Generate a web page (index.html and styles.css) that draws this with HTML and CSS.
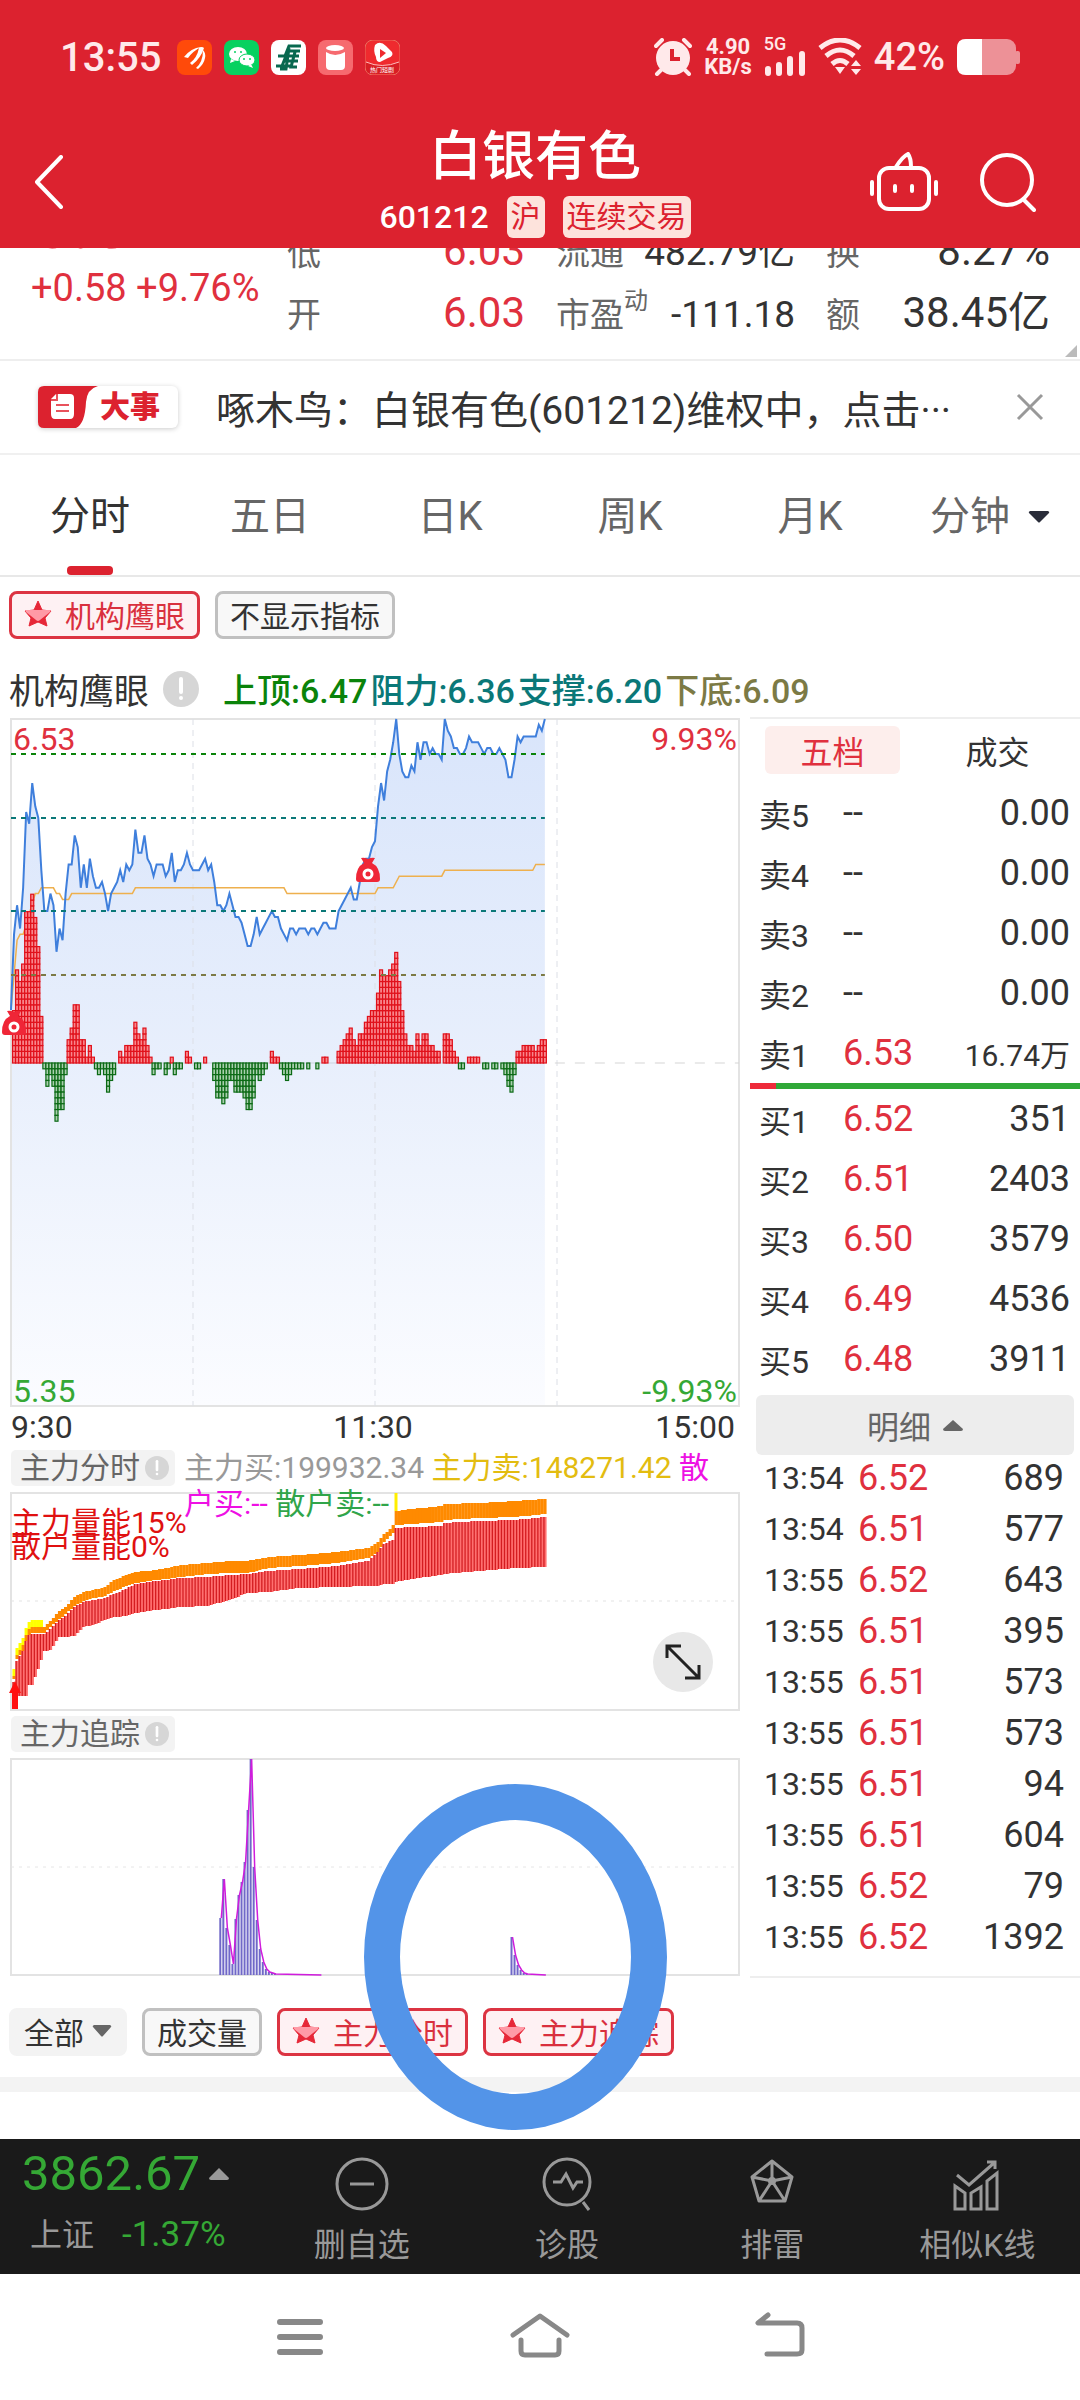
FILE: index.html
```html
<!DOCTYPE html>
<html lang="zh-CN">
<head>
    <meta charset="UTF-8">
    <meta name="viewport" content="width=device-width, initial-scale=1.0">
    <title>白银有色 601212</title>
    <link rel="stylesheet" href="styles.css">
</head>
<body>
    <svg class="defs" aria-hidden="true">
        <symbol id="star" viewBox="0 0 28 28">
            <path d="M14 1l4 9 9 1-6 7 2 8-9-4-9 4 2-8-6-7 9-1z" fill="#e62838" stroke="#e62838" stroke-linejoin="round"/>
            <path d="M2 10h24q1 1 0 2l-10 8q-2 2-4 0L2 12q-1-1 0-2z" fill="#ff9aa6"/>
        </symbol>
        <symbol id="info" viewBox="0 0 36 36">
            <circle cx="18" cy="18" r="18" fill="#d6d6d6"/>
            <path d="M18 8v13" stroke="#fff" stroke-width="4" stroke-linecap="round"/>
            <circle cx="18" cy="27" r="2" fill="#fff"/>
        </symbol>
    </svg>

    <header class="top">
        <div class="status-bar">
            <span class="clock">13:55</span>
            <div class="app-icons">
                <svg viewBox="0 0 35 35"><rect width="35" height="35" rx="8" fill="#ff4a0a"/><path d="M7 17q7-9 17-10-8 4-13 11zM13 23q7-5 9-15 3-2 5 0-3 10-12 17zM19 28q7-6 7-18 3 3 2 8-1 6-7 11z" fill="#fff"/></svg>
                <svg viewBox="0 0 35 35"><rect width="35" height="35" rx="8" fill="#07d160"/><ellipse cx="14" cy="14" rx="9" ry="7" fill="#fff"/><path d="M7 19l-1 4 5-2z" fill="#fff"/><ellipse cx="23" cy="20" rx="8" ry="6" fill="#fff" stroke="#07d160"/><path d="M27 24l2 4-5-2z" fill="#fff"/><g fill="#07d160"><circle cx="11" cy="12" r="1"/><circle cx="17" cy="12" r="1"/><circle cx="20" cy="19" r="1"/><circle cx="26" cy="19" r="1"/></g></svg>
                <svg viewBox="0 0 35 35"><rect width="35" height="35" rx="8" fill="#fff"/><path d="M30 6H18l-4 10H7M29 11H18M28 16H15l-4 10H5M27 21H12M22 26H10M18 8l-3 21H9M24 12l-4 15h6" fill="none" stroke="#08684f" stroke-width="3"/></svg>
                <svg viewBox="0 0 35 35"><rect width="35" height="35" rx="8" fill="#f66a6f"/><ellipse cx="17" cy="8" rx="9" ry="3" fill="#fff"/><path d="M8 12q9 6 19 0v14q0 4-4 4H12q-4 0-4-4z" fill="#fff"/></svg>
                <svg viewBox="0 0 35 35"><rect width="35" height="35" rx="8" fill="#ef2a2e" stroke="#e8705e"/><path d="M10 5q5-5 11 1l6 6q2 4-4 6l-8 4q-4 0-4-5-3-6-1-12z" fill="#fff"/><path d="M15 9l6 4-6 5z" fill="#ef2a2e"/><path d="M1 22q16 7 33 0v6q0 6-7 6H8q-7 0-7-6z" fill="#d81e24"/><path d="M1 22q16 7 33 0" fill="none" stroke="#fbb" /><text x="5" y="32" class="app-label">热门短剧</text></svg>
            </div>
            <div class="signals">
                <svg width="38" height="38" viewBox="0 0 38 38"><circle cx="19" cy="20" r="17" fill="#ffe9ea"/><path d="M2 8l6-6M36 8l-6-6M7 32l-4 4M31 32l4 4" stroke="#ffe9ea" stroke-width="4" stroke-linecap="round"/><path d="M18 11v10h8" fill="none" stroke="#dc222f" stroke-width="4"/></svg>
                <div class="speed">4.90<br>KB/s</div>
                <div class="mobile">
                    <span>5G</span>
                    <svg width="42" height="26" viewBox="0 0 42 26"><path d="M4 19v4M15 15v8M26 9v14M38 4v19" stroke="#ffe9ea" stroke-width="6" stroke-linecap="round"/></svg>
                </div>
                <svg width="44" height="38" viewBox="0 0 44 38"><path d="M2 10q20-16 40 0M8 18q14-12 28 0M14 26q8-7 16 0" fill="none" stroke="#ffe9ea" stroke-width="5"/><path d="M17 29h10l-5 7zM33 28l5-6 5 6zM33 31l5 6 5-6z" fill="#ffe9ea"/></svg>
                <span class="percent">42%</span>
                <svg width="63" height="36" viewBox="0 0 63 36"><rect width="59" height="36" rx="9" fill="#ed9197"/><rect x="58" y="12" width="5" height="13" rx="2" fill="#ed9197"/><path d="M25 0H9Q0 0 0 9v18q0 9 9 9h16z" fill="#fff"/></svg>
            </div>
        </div>
        <div class="title-bar">
            <button class="icon-button" aria-label="返回"><svg width="30" height="54" viewBox="0 0 30 54"><path d="M27 2L3 27l24 25" fill="none" stroke="#fff" stroke-width="4" stroke-linecap="round" stroke-linejoin="round"/></svg></button>
            <div class="stock">
                <h1>白银有色</h1>
                <p class="code">601212 <span class="badge">沪</span> <span class="badge">连续交易</span></p>
            </div>
            <div class="actions">
                <button class="icon-button" aria-label="智能助手"><svg width="68" height="60" viewBox="0 0 68 60"><g fill="none" stroke="#fff" stroke-width="4" stroke-linecap="round"><rect x="9" y="16" width="50" height="41" rx="10"/><path d="M2 30v12M66 30v12M25 34v5M42 34v5M26 15q6-10 12-13 3 4 3 13"/></g></svg></button>
                <button class="icon-button" aria-label="搜索"><svg width="56" height="60" viewBox="0 0 56 60"><circle cx="27" cy="28" r="25" fill="none" stroke="#fff" stroke-width="4"/><path d="M44 48l10 10" stroke="#fff" stroke-width="4" stroke-linecap="round"/></svg></button>
            </div>
        </div>
    </header>

    <main>
        <section class="quotes">
            <div class="price">
                <div class="last">6.52</div>
                <div class="change">+0.58 +9.76%</div>
            </div>
            <dl class="figures">
                <dt>低</dt><dd class="up">6.03</dd>
                <dt>流通</dt><dd class="long">482.79亿</dd>
                <dt>换</dt><dd>8.27%</dd>
                <dt>开</dt><dd class="up">6.03</dd>
                <dt>市盈<sup>动</sup></dt><dd class="long">-111.18</dd>
                <dt>额</dt><dd>38.45亿</dd>
            </dl>
            <span class="corner"></span>
        </section>

        <section class="notice">
            <div class="event">
                <svg width="60" height="42" viewBox="0 0 60 42"><path d="M6 0h54Q49 3 48 16q-1 22-10 26H6q-6 0-6-6V6q0-6 6-6z" fill="#dc222f"/><path d="M18 8h14q4 0 4 4v16q0 5-4 5H17q-4 0-4-5V13z" fill="#fff"/><path d="M19 8v6h-6M18 19h13M18 25h13" fill="none" stroke="#e8525c" stroke-width="2"/></svg>
                <b>大事</b>
            </div>
            <a href="#">啄木鸟：白银有色(601212)维权中，点击···</a>
            <button class="icon-button" aria-label="关闭"><svg width="28" height="28" viewBox="0 0 28 28"><path d="M2 2l24 24M26 2L2 26" stroke="#999" stroke-width="3"/></svg></button>
        </section>

        <nav class="tabs">
            <a href="#" class="active">分时</a>
            <a href="#">五日</a>
            <a href="#">日K</a>
            <a href="#">周K</a>
            <a href="#">月K</a>
            <a href="#">分钟 <svg width="22" height="12" viewBox="0 0 22 12"><path d="M2 0h18q2 1 1 2l-9 9q-1 1-2 0L1 2Q0 1 2 0z" fill="#2a2d3a"/></svg></a>
        </nav>

        <div class="pills">
            <button class="pill on"><svg><use href="#star"/></svg>机构鹰眼</button>
            <button class="pill">不显示指标</button>
        </div>

        <div class="indicator">
            <span class="name">机构鹰眼</span>
            <svg class="info"><use href="#info"/></svg>
            <span class="top-level">上顶:6.47</span>
            <span class="teal">阻力:6.36</span>
            <span class="teal">支撑:6.20</span>
            <span class="olive">下底:6.09</span>
        </div>

        <div class="board">
            <div class="charts">
                <svg id="priceChart" class="chart" viewBox="0 0 728 687">
                    <defs>
                        <linearGradient id="fade" x1="0" y1="0" x2="0" y2="687" gradientUnits="userSpaceOnUse">
                            <stop offset="0" stop-color="#d9e5fb"/>
                            <stop offset="0.5" stop-color="#e8effc"/>
                            <stop offset="1" stop-color="#fbfcff"/>
                        </linearGradient>
                    </defs>
                </svg>
                <div class="axis"><span>9:30</span><span>11:30</span><span>15:00</span></div>

                <div class="sub-head">
                    <span class="chip">主力分时<svg><use href="#info"/></svg></span>
                    <p class="legend"><span class="gray">主力买:199932.34</span> <span class="gold">主力卖:148271.42</span> <span class="pink">散户买:--</span> <span class="green">散户卖:--</span></p>
                </div>
                <div class="sub-chart">
                    <svg id="forceChart" class="chart" viewBox="0 0 728 217"></svg>
                    <button class="expand" aria-label="全屏"><svg width="36" height="36" viewBox="0 0 36 36"><path d="M2 14V2h14M2 2l32 32M20 34h14V21" fill="none" stroke="#222" stroke-width="3"/></svg></button>
                </div>

                <div class="sub-head">
                    <span class="chip">主力追踪<svg><use href="#info"/></svg></span>
                </div>
                <svg id="traceChart" class="chart trace" viewBox="0 0 728 216"></svg>
            </div>

            <aside class="book">
                <div class="book-tabs">
                    <button class="active">五档</button>
                    <button>成交</button>
                </div>
                <table class="levels">
                    <tr><th>卖5</th><td>--</td><td>0.00</td></tr>
                    <tr><th>卖4</th><td>--</td><td>0.00</td></tr>
                    <tr><th>卖3</th><td>--</td><td>0.00</td></tr>
                    <tr><th>卖2</th><td>--</td><td>0.00</td></tr>
                    <tr><th>卖1</th><td class="up">6.53</td><td class="small">16.74万</td></tr>
                </table>
                <div class="ratio"><span style="width: 8%"></span></div>
                <table class="levels">
                    <tr><th>买1</th><td class="up">6.52</td><td>351</td></tr>
                    <tr><th>买2</th><td class="up">6.51</td><td>2403</td></tr>
                    <tr><th>买3</th><td class="up">6.50</td><td>3579</td></tr>
                    <tr><th>买4</th><td class="up">6.49</td><td>4536</td></tr>
                    <tr><th>买5</th><td class="up">6.48</td><td>3911</td></tr>
                </table>
                <button class="detail">明细 <svg width="20" height="11" viewBox="0 0 20 11"><path d="M10 0l10 9q0 2-2 2H2q-2 0-2-2z" fill="#666"/></svg></button>
                <table class="ticks">
                    <tr><td>13:54</td><td class="up">6.52</td><td>689</td></tr>
                    <tr><td>13:54</td><td class="up">6.51</td><td>577</td></tr>
                    <tr><td>13:55</td><td class="up">6.52</td><td>643</td></tr>
                    <tr><td>13:55</td><td class="up">6.51</td><td>395</td></tr>
                    <tr><td>13:55</td><td class="up">6.51</td><td>573</td></tr>
                    <tr><td>13:55</td><td class="up">6.51</td><td>573</td></tr>
                    <tr><td>13:55</td><td class="up">6.51</td><td>94</td></tr>
                    <tr><td>13:55</td><td class="up">6.51</td><td>604</td></tr>
                    <tr><td>13:55</td><td class="up">6.52</td><td>79</td></tr>
                    <tr><td>13:55</td><td class="up">6.52</td><td>1392</td></tr>
                </table>
            </aside>
        </div>

        <div class="pills lower">
            <button class="pill plain">全部<svg class="caret" viewBox="0 0 20 12"><path d="M2 0h16q2 1 1 2l-8 9q-1 1-2 0L1 2Q0 1 2 0z" fill="#666"/></svg></button>
            <button class="pill">成交量</button>
            <button class="pill on"><svg><use href="#star"/></svg>主力分时</button>
            <button class="pill on"><svg><use href="#star"/></svg>主力追踪</button>
        </div>
        <div class="band"></div>

        <!-- hand-drawn mark over the trace chart -->
        <div class="ring"></div>
    </main>

    <footer class="toolbar">
        <a href="#" class="index">
            <span class="value">3862.67 <svg width="20" height="12" viewBox="0 0 20 12"><path d="M10 0l10 10q0 2-2 2H2q-2 0-2-2z" fill="#999"/></svg></span>
            <span class="sub"><span>上证</span><span class="down">-1.37%</span></span>
        </a>
        <a href="#"><svg width="54" height="54" viewBox="0 0 54 54"><g fill="none" stroke="#999" stroke-width="3"><circle cx="27" cy="27" r="25"/><path d="M15 27h24"/></g></svg>删自选</a>
        <a href="#"><svg width="54" height="54" viewBox="0 0 54 54"><g fill="none" stroke="#999" stroke-width="3"><circle cx="27" cy="25" r="23"/><path d="M13 25h8l5-8 7 14 4-6h6M43 45l6 8"/></g></svg>诊股</a>
        <a href="#"><svg width="54" height="54" viewBox="0 0 54 54"><g fill="none" stroke="#999" stroke-width="3" stroke-linejoin="round"><path d="M27 4l20 16-7 24H14L7 20zM27 4v20M7 20l20 4 20-4M14 44l13-20 13 20"/></g><circle cx="27" cy="24" r="4" fill="#999"/></svg>排雷</a>
        <a href="#"><svg width="54" height="54" viewBox="0 0 54 54"><g fill="none" stroke="#999" stroke-width="3"><path d="M5 52V29l10 7v16zM21 52V36l10-6v22zM37 52V24l10-8v36zM7 18l12 10L44 6M37 5h8v7"/></g></svg>相似K线</a>
    </footer>

    <nav class="system">
        <button class="icon-button" aria-label="菜单"><svg width="46" height="44" viewBox="0 0 46 44"><path d="M3 7h40M3 22h40M3 37h40" stroke="#888" stroke-width="6" stroke-linecap="round"/></svg></button>
        <button class="icon-button" aria-label="主页"><svg width="60" height="50" viewBox="0 0 60 50"><path d="M3 23L30 4l27 19M11 28v11q0 4 4 4h30q4 0 4-4V28" fill="none" stroke="#888" stroke-width="5" stroke-linecap="round" stroke-linejoin="round"/></svg></button>
        <button class="icon-button" aria-label="后退"><svg width="50" height="50" viewBox="0 0 50 50"><path d="M13 3L3 11h39q5 0 5 5v22q0 4-5 4H12" fill="none" stroke="#888" stroke-width="5" stroke-linecap="round" stroke-linejoin="round"/></svg></button>
    </nav>

    <script src="script.js"></script>
</body>
</html>
```

FILE: styles.css
```css
* {
    box-sizing: border-box;
}

body {
    margin: 0;
    min-height: 100vh;
    display: flex;
    flex-direction: column;
    background: #fff;
    color: #333;
    font-family: Roboto, "Noto Sans CJK SC", sans-serif;
    font-size: 32px;
}

h1, p, dl, dd {
    margin: 0;
}

a {
    color: inherit;
    text-decoration: none;
}

button {
    font: inherit;
    color: inherit;
    border: 0;
    background: none;
    padding: 0;
}

svg {
    display: block;
    flex: none;
}

.defs {
    width: 0;
    height: 0;
    position: absolute;
}

.icon-button {
    display: flex;
}

.up {
    color: #e0303e;
}

/* header */
.top {
    background: #dc222f;
    color: #fff;
    height: 248px;
}

.status-bar {
    display: flex;
    align-items: center;
    padding: 34px 60px 0 60px;
    height: 80px;
    color: #ffe9ea;
}

.clock {
    font-size: 40px;
    font-weight: 500;
}

.app-icons {
    display: flex;
    gap: 12px;
    margin-left: 16px;
}

.app-icons svg {
    width: 35px;
    height: 35px;
}

.app-label {
    font-size: 6px;
    fill: #fff;
}

.signals {
    display: flex;
    align-items: center;
    gap: 12px;
    margin-left: auto;
}

.speed {
    font-size: 22px;
    font-weight: 700;
    line-height: 20px;
    text-align: center;
}

.mobile {
    font-size: 18px;
    font-weight: 500;
    line-height: 12px;
}

.percent {
    font-size: 38px;
    font-weight: 500;
}

.title-bar {
    display: grid;
    grid-template-columns: 1fr auto 1fr;
    align-items: center;
    padding: 45px 44px 0 34px;
}

.stock {
    text-align: center;
}

h1 {
    font-size: 53px;
    font-weight: 500;
    line-height: 64px;
}

.code {
    display: flex;
    align-items: center;
    justify-content: center;
    gap: 18px;
    font-weight: 500;
    line-height: 42px;
    margin-top: 7px;
}

.badge {
    padding: 0 4px;
    border-radius: 6px;
    background: #fde3dc;
    color: #dc222f;
    font-size: 30px;
    font-weight: 400;
}

.actions {
    display: flex;
    justify-content: flex-end;
    gap: 42px;
}

/* scrolled content */
main {
    flex: 1;
    position: relative;
    overflow: hidden;
}

.quotes {
    position: relative;
    display: grid;
    grid-template-columns: 256px 1fr;
    align-content: end;
    align-items: end;
    height: 113px;
    padding: 0 30px 14px 31px;
    overflow: hidden;
    border-bottom: 2px solid #eee;
}

.price {
    color: #e0303e;
    padding-bottom: 32px;
}

.last {
    font-size: 72px;
    line-height: 78px;
}

.change {
    font-size: 38px;
    line-height: 50px;
    white-space: nowrap;
}

.figures {
    display: grid;
    grid-template-columns: 80px 158px 110px 160px 60px 1fr;
    align-items: baseline;
    font-size: 42px;
    line-height: 60px;
}

.figures dt {
    color: #666;
    font-size: 34px;
    white-space: nowrap;
}

.figures dd {
    display: flex;
    justify-content: flex-end;
    white-space: nowrap;
}

.figures .long {
    font-size: 37px;
}

.figures dt:nth-of-type(3n+2),
.figures dt:nth-of-type(3n) {
    padding-left: 31px;
}

.figures sup {
    font-size: 24px;
    line-height: 0;
    vertical-align: 18px;
}

.corner {
    position: absolute;
    right: 3px;
    bottom: 2px;
    border: 6px solid transparent;
    border-right-color: #bbb;
    border-bottom-color: #bbb;
}

.notice {
    display: flex;
    align-items: center;
    height: 94px;
    padding: 0 36px 0 38px;
    border-bottom: 2px solid #f0f0f0;
    font-size: 39px;
}

.notice a {
    flex: 1;
    margin-left: 38px;
    white-space: nowrap;
}

.event {
    display: flex;
    align-items: center;
    gap: 2px;
    width: 140px;
    border-radius: 6px;
    box-shadow: 0 1px 5px #ccc;
    color: #dc222f;
    font-size: 30px;
    line-height: 42px;
}

.event b {
    font-weight: 900;
}

.tabs {
    display: grid;
    grid-template-columns: repeat(6, 1fr);
    border-bottom: 2px solid #e8e8e8;
    color: #666;
    font-size: 40px;
    line-height: 116px;
}

.tabs a {
    position: relative;
    display: flex;
    justify-content: center;
    align-items: center;
    gap: 18px;
    padding-top: 4px;
}

.tabs .active {
    color: #333;
}

.tabs .active::after {
    content: "";
    position: absolute;
    bottom: 0;
    width: 46px;
    height: 9px;
    border-radius: 4px;
    background: #dc222f;
}

.pills {
    display: flex;
    gap: 15px;
    padding: 14px 9px 0;
}

.pill {
    display: flex;
    align-items: center;
    gap: 13px;
    height: 48px;
    padding: 0 12px 2px;
    border: 3px solid #c0c0c0;
    border-radius: 8px;
    background: #f8f8f8;
    font-size: 30px;
}

.pill svg {
    width: 28px;
    height: 28px;
}

.pill.on {
    border-color: #dc3442;
    background: #fef1f3;
    color: #d9303e;
}

.pill.plain {
    border-color: #f3f3f3;
    background: #f3f3f3;
    gap: 8px;
}

.pill .caret {
    width: 20px;
    height: 12px;
}

.lower {
    padding-top: 30px;
}

.indicator {
    display: flex;
    align-items: center;
    gap: 3px;
    height: 78px;
    padding: 21px 9px 0;
    font-size: 34px;
    font-weight: 500;
    white-space: nowrap;
}

.name {
    font-size: 35px;
    font-weight: 400;
}

.info {
    width: 36px;
    height: 36px;
    margin: 0 21px 0 11px;
}

.top-level { color: #0a830a; }
.teal { color: #0a7878; }
.olive { color: #7c7a45; }

.board {
    display: grid;
    grid-template-columns: 739fr 330fr;
    gap: 11px;
}

.charts {
    padding-left: 11px;
    padding-top: 2px;
}

.chart {
    width: 100%;
    height: auto;
    overflow: visible;
}

.chart text {
    font-size: 32px;
}

.chart .overlay {
    font-size: 30px;
    fill: #e01010;
}

.axis {
    display: grid;
    grid-template-columns: 1fr auto 1fr;
    padding-right: 4px;
    line-height: 42px;
    padding-bottom: 2px;
}

.axis span:last-child {
    text-align: right;
}

.sub-head {
    display: flex;
    align-items: flex-start;
    gap: 9px;
    height: 36px;
    margin-bottom: 7px;
    white-space: nowrap;
}

.chip {
    display: flex;
    align-items: center;
    gap: 5px;
    padding: 0 6px 0 9px;
    border-radius: 5px;
    background: #f3f3f3;
    color: #666;
    font-size: 30px;
    line-height: 36px;
}

.chip svg {
    width: 24px;
    height: 24px;
}

/* second line runs into the chart below */
.legend {
    position: relative;
    z-index: 1;
    flex: 1;
    font-size: 30px;
    line-height: 36px;
    white-space: normal;
    word-break: break-all;
}

.gray { color: #999; }
.gold { color: #e3bc10; }
.pink { color: #ee10e4; }
.green { color: #30a54a; }

.sub-chart {
    position: relative;
    margin-bottom: 6px;
}

.expand {
    position: absolute;
    right: 26px;
    bottom: 18px;
    display: flex;
    align-items: center;
    justify-content: center;
    width: 60px;
    height: 60px;
    border-radius: 50%;
    background: #e8e8e8;
}

.book {
    border-top: 2px solid #eee;
    border-bottom: 2px solid #eee;
}

.book-tabs {
    display: grid;
    grid-template-columns: 1fr 1fr;
    gap: 30px;
    padding: 7px 15px 9px;
}

.book-tabs button {
    height: 48px;
    border-radius: 6px;
}

.book-tabs .active {
    background: #fdeeec;
    color: #e0303e;
}

table {
    width: 100%;
    border-collapse: collapse;
    table-layout: fixed;
}

th, td {
    padding: 0;
    text-align: left;
    white-space: nowrap;
    font-size: 36px;
}

td:last-child {
    text-align: right;
}

.levels tr {
    height: 60px;
}

.levels th {
    width: 93px;
    padding-left: 9px;
    font-size: 32px;
    font-weight: 400;
}

.levels td:last-child {
    padding-right: 10px;
}

.levels .small {
    font-size: 30px;
}

.ratio {
    background: #30a838;
}

.ratio span {
    display: block;
    height: 6px;
    background: #ee2a3a;
}

.detail {
    display: flex;
    align-items: center;
    justify-content: center;
    gap: 12px;
    width: calc(100% - 12px);
    height: 60px;
    margin: 6px 6px -3px;
    border-radius: 6px;
    background: #ededed;
    color: #666;
}

.ticks {
    margin-bottom: 14px;
}

.ticks tr {
    height: 51px;
}

.ticks td:first-child {
    width: 108px;
    padding-left: 14px;
    font-size: 32px;
}

.ticks td:last-child {
    padding-right: 16px;
}

.band {
    height: 15px;
    margin-top: 21px;
    background: #f3f3f3;
}

.ring {
    position: absolute;
    left: 364px;
    top: 1536px;
    width: 303px;
    height: 346px;
    border: 36px solid #5394e8;
    border-radius: 50%;
}

/* bottom bars */
.toolbar {
    display: grid;
    grid-template-columns: 259fr 205fr 205fr 205fr 205fr;
    height: 135px;
    padding-top: 18px;
    background: #1a1a1a;
    color: #999;
}

.toolbar a {
    display: flex;
    flex-direction: column;
    align-items: center;
    gap: 10px;
    line-height: 48px;
}

.toolbar .index {
    align-items: flex-start;
    gap: 20px;
    padding-left: 22px;
}

.value {
    display: flex;
    align-items: center;
    gap: 9px;
    color: #35a835;
    font-size: 49px;
    line-height: 34px;
}

.sub {
    display: flex;
    gap: 28px;
    padding-left: 8px;
}

.down {
    color: #35a835;
    font-size: 35px;
}

.system {
    display: grid;
    grid-template-columns: repeat(3, 1fr);
    justify-items: center;
    align-items: center;
    height: 126px;
    padding: 0 180px;
}
```

FILE: script.js
```js
const SVG = 'http://www.w3.org/2000/svg';
const STEP = 728 / 240;   // one minute
const CENT = 5.82;        // one cent of price

function add(parent, name, attrs, text) {
    const el = document.createElementNS(SVG, name);
    for (const key in attrs) el.setAttribute(key, attrs[key]);
    if (text) el.textContent = text;
    parent.appendChild(el);
    return el;
}

function frame(svg, height) {
    add(svg, 'rect', { x: 0, y: 0, width: 728, height: height, fill: 'none', stroke: '#e3e3e3', 'stroke-width': 2 });
}

function line(svg, x1, y1, x2, y2, color, dash, width) {
    add(svg, 'line', { x1, y1, x2, y2, stroke: color, 'stroke-dasharray': dash, 'stroke-width': width });
}

// price per minute, in cents
const prices = [
    603, 616, 621, 617, 624, 637, 635, 642, 638, 636, 627, 620, 620, 623, 621, 613, 617, 615, 623, 628,
    628, 633, 631, 624, 628, 624, 629, 626, 624, 624, 625, 623, 620, 623, 624, 625, 627, 625, 628, 627,
    628, 634, 630, 630, 633, 629, 628, 626, 628, 628, 628, 626, 627, 630, 625, 627, 627, 628, 630, 628,
    627, 627, 627, 628, 629, 627, 628, 625, 621, 621, 620, 621, 623, 621, 619, 619, 618, 616, 614, 614,
    616, 619, 616, 617, 618, 619, 620, 619, 619, 617, 616, 615, 617, 617, 616, 617, 617, 617, 616, 617,
    617, 616, 617, 618, 618, 617, 617, 617, 620, 621, 622, 623, 624, 622, 622, 625, 628, 629, 629, 631,
    632, 638, 642, 639, 644, 646, 649, 653, 647, 644, 643, 643, 645, 644, 649, 646, 649, 649, 647, 648,
    647, 647, 646, 653, 651, 650, 648, 648, 647, 647, 648, 650, 649, 649, 649, 648, 647, 648, 648, 647,
    647, 648, 647, 646, 643, 643, 646, 650, 649, 650, 650, 650, 650, 650, 652, 651, 653
];

// [minute, cents] of the average price
const average = [
    [0, 603], [1, 609], [2, 615], [3, 616], [4, 616], [8, 623], [9, 623], [10, 624], [14, 624], [15, 623], [16, 623],
    [17, 622], [19, 622], [20, 623], [40, 623], [41, 624], [90, 624], [91, 623], [120, 623], [121, 624],
    [126, 624], [128, 626], [142, 626], [143, 627], [172, 627], [173, 628], [176, 628]
];

// cells above (+) or below (-) the zero line
const cells = [
    0, 9, 16, 14, 17, 26, 26, 29, 25, 20, 8, -1, -4, -2, -4, -10, -8, -8, -2, 4,
    6, 10, 10, 4, 4, 1, 3, 1, -1, -2, -1, -2, -5, -3, -2, 0, 2, 1, 3, 3,
    3, 7, 5, 4, 6, 3, 1, -2, -1, -1, 0, -2, -1, 1, -2, -1, -1, 0, 2, 1,
    0, -1, -1, 0, 1, 0, 0, -3, -6, -6, -7, -6, -3, -3, -5, -5, -5, -6, -8, -8,
    -6, -2, -3, -2, -1, 0, 2, 1, 1, -1, -2, -3, -2, -1, -1, -1, -1, 0, -1, 0,
    0, -1, 0, 1, 1, 0, 0, 0, 2, 3, 4, 5, 6, 4, 3, 5, 5, 7, 8, 9,
    9, 12, 16, 15, 15, 16, 17, 19, 14, 9, 5, 3, 3, 2, 5, 3, 5, 5, 3, 3,
    2, 2, 0, 5, 5, 4, 2, 1, -1, -1, 0, 1, 1, 1, 1, 0, -1, -1, 0, -1,
    -1, 0, -1, -2, -4, -5, -2, 2, 2, 3, 3, 3, 3, 2, 3, 4, 4
];

const priceY = cents => (653 - cents) * CENT;

function moneyBag(svg, x, y) {
    const g = add(svg, 'g', { transform: `translate(${x} ${y})` });
    add(g, 'path', { d: 'M-7-12q3-1 7 1 4-2 7-1l-3 5q8 4 8 16 0 3-3 3H-9q-3 0-3-3 0-12 8-16z', fill: '#ef2637' });
    add(g, 'circle', { cx: 0, cy: 4, r: 4, fill: '#ef2637', stroke: '#fff', 'stroke-width': 3 });
}

function drawPrice() {
    const svg = document.getElementById('priceChart');
    const points = prices.map((p, i) => `${i * STEP},${priceY(p)}`).join(' ');
    const end = 176 * STEP;

    add(svg, 'polygon', { points: `0,687 ${points} ${end},687`, fill: 'url(#fade)' });
    frame(svg, 687);
    [60, 120, 180].forEach(m => line(svg, m * STEP, 0, m * STEP, 687, '#dcdfe6', '6 5', 1));
    line(svg, 0, 344, end, 344, '#ccd3df', '', 1);
    line(svg, end + 10, 344, 728, 344, '#d5d5d5', '10 10', 1);

    add(svg, 'polyline', {
        points: average.map(p => `${p[0] * STEP},${priceY(p[1])}`).join(' '),
        fill: 'none', stroke: '#eeb04e', 'stroke-width': 1.5
    });
    add(svg, 'polyline', { points, fill: 'none', stroke: '#3f7fdc', 'stroke-width': 2 });

    cells.forEach((n, i) => {
        for (let k = 0; k < Math.abs(n); k++) {
            add(svg, 'rect', {
                x: i * STEP - 1.5, y: n > 0 ? 344 - (k + 1) * CENT : 344 + k * CENT,
                width: 3, height: CENT,
                fill: n > 0 ? '#f8868c' : '#a9cfae', stroke: n > 0 ? '#e0101a' : '#0a6a14', 'stroke-width': 1.2
            });
        }
    });

    line(svg, 0, priceY(647), end, priceY(647), '#0a830a', '5 5', 2);
    line(svg, 0, priceY(636), end, priceY(636), '#0a7878', '5 5', 2);
    line(svg, 0, priceY(620), end, priceY(620), '#0a7878', '5 5', 2);
    line(svg, 0, priceY(609), end, priceY(609), '#7c7a45', '5 5', 2);

    moneyBag(svg, 3, 304);
    moneyBag(svg, 357, 151);

    add(svg, 'text', { x: 2, y: 31, fill: '#e0303e' }, '6.53');
    add(svg, 'text', { x: 726, y: 31, fill: '#e0303e', 'text-anchor': 'end' }, '9.93%');
    add(svg, 'text', { x: 2, y: 683, fill: '#35a835' }, '5.35');
    add(svg, 'text', { x: 726, y: 683, fill: '#35a835', 'text-anchor': 'end' }, '-9.93%');
}

// minute, band top, band bottom, bar top, bar bottom
const force = [
    [1, 183, 186, 189, 216], [2, 162, 166, 168, 203], [4, 152, 158, 158, 203], [5, 142, 148, 148, 203],
    [6, 136, 142, 142, 192], [7, 134, 140, 141, 192], [9, 134, 140, 141, 176], [11, 134, 140, 141, 158],
    [13, 128, 134, 136, 157], [16, 118, 126, 127, 144], [18, 114, 121, 123, 144], [21, 104, 113, 114, 143],
    [24, 99, 108, 109, 134], [27, 97, 105, 107, 132], [31, 94, 103, 105, 127], [34, 87, 98, 101, 124],
    [38, 82, 93, 96, 123], [41, 79, 90, 91, 120], [48, 77, 87, 88, 117], [56, 72, 84, 85, 114],
    [65, 70, 81, 84, 113], [72, 68, 80, 82, 107], [78, 68, 80, 81, 100], [85, 64, 75, 78, 99],
    [95, 62, 73, 76, 95], [107, 59, 70, 73, 94], [118, 55, 65, 68, 93], [121, 49, 59, 59, 93],
    [123, 41, 49, 51, 91], [125, 36, 43, 48, 91], [126, 32, 40, 47, 91], [127, 18, 32, 35, 89],
    [132, 16, 31, 34, 86], [142, 13, 29, 33, 82], [143, 11, 27, 30, 81], [154, 10, 25, 28, 78],
    [166, 8, 24, 27, 75], [176, 6, 21, 24, 74]
];

function at(rows, m, col) {
    const i = rows.findIndex(r => r[0] >= m);
    if (i <= 0) return rows[0][col];
    const a = rows[i - 1], b = rows[i];
    return Math.round(a[col] + (b[col] - a[col]) * (m - a[0]) / (b[0] - a[0]));
}

function drawForce() {
    const svg = document.getElementById('forceChart');
    frame(svg, 217);
    line(svg, 0, 108, 728, 108, '#e3e3e3', '3 5', 1);

    for (let m = 1; m <= 176; m++) {
        const x = m * STEP;
        const top = at(force, m, 1), bottom = at(force, m, 2);
        const barTop = at(force, m, 3), barBottom = at(force, m, 4);
        add(svg, 'rect', { x: x - 1.6, y: top, width: 3.3, height: bottom - top, fill: '#ff8a00' });
        add(svg, 'rect', { x: x - 1.6, y: barTop, width: 3.3, height: barBottom - barTop, fill: '#ff7070' });
        add(svg, 'rect', { x: x - 1.6, y: barTop, width: 1.3, height: barBottom - barTop, fill: '#d41c20' });
        if (m < 11) add(svg, 'rect', { x: x - 1.6, y: top - 7, width: 3.3, height: 7, fill: '#ffff00' });
    }
    line(svg, 385, 0, 385, 18, '#ffee00', '', 3);
    add(svg, 'path', { d: 'M4 188l6 12H7v16H1v-16h-3z', fill: '#ff1010' });

    add(svg, 'text', { x: 0, y: 40, class: 'overlay' }, '主力量能15%');
    add(svg, 'text', { x: 0, y: 64, class: 'overlay' }, '散户量能0%');
}

// [minute, height] of each run
const traces = [
    [[69, 57], [70, 96], [71, 47], [72, 30], [73, 11], [74, 56], [75, 80], [76, 93], [77, 113], [78, 165],
     [79, 216], [80, 108], [81, 55], [82, 26], [83, 13], [84, 6], [85, 3], [86, 2], [87, 1], [102, 0]],
    [[165, 38], [166, 20], [167, 10], [168, 5], [169, 2], [170, 1], [176, 0]]
];

function drawTrace() {
    const svg = document.getElementById('traceChart');
    frame(svg, 216);
    line(svg, 0, 108, 728, 108, '#e6e6e6', '3 5', 1);
    traces.forEach(run => {
        run.forEach(p => line(svg, p[0] * STEP, 216 - p[1], p[0] * STEP, 216, '#7068c8', '', 2));
        add(svg, 'polyline', {
            points: run.map(p => `${p[0] * STEP + 1},${216 - p[1]}`).join(' '),
            fill: 'none', stroke: '#d01cdc', 'stroke-width': 1.5
        });
    });
}

drawPrice();
drawForce();
drawTrace();
```
